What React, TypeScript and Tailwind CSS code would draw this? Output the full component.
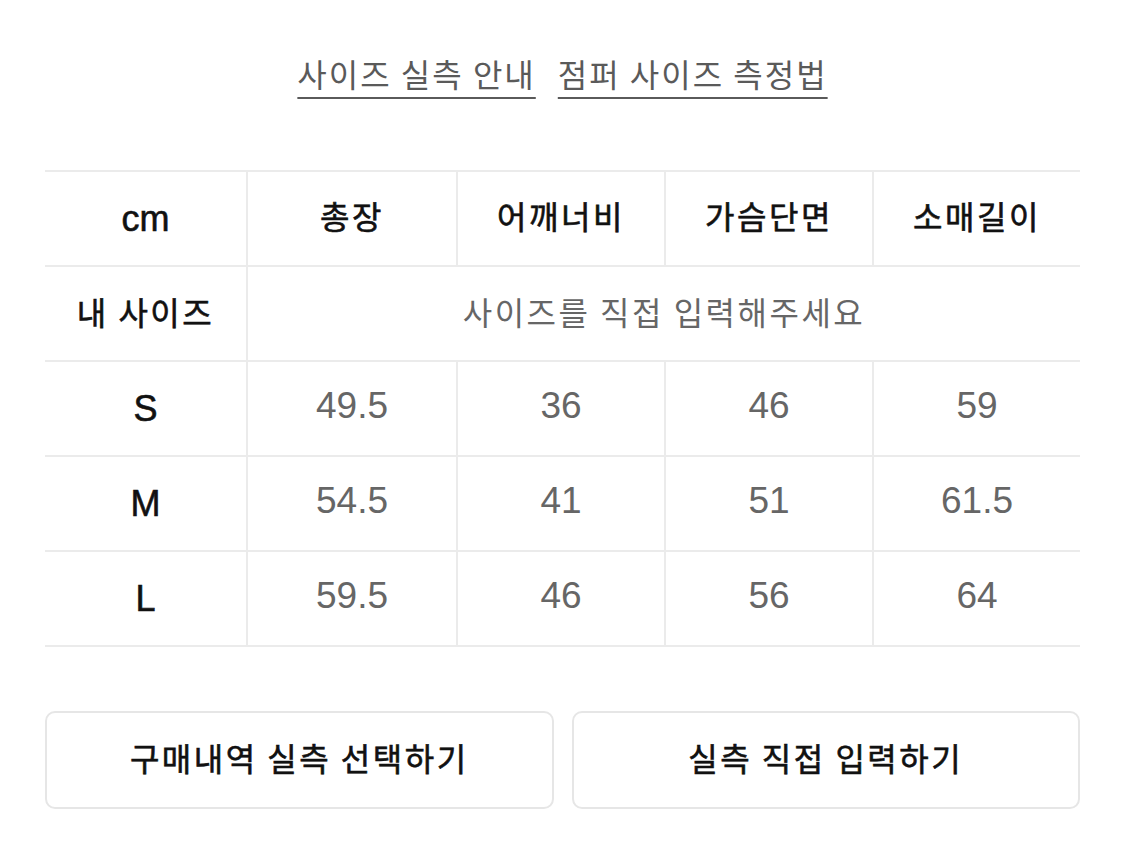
const ko = "font-['Noto_Sans_CJK_KR','Noto_Sans_CJK_SC',sans-serif] tracking-[2.5px]"
const latin = "font-['Liberation_Sans','Noto_Sans_CJK_KR',sans-serif]"
const strong = 'text-[#111] [-webkit-text-stroke:0.6px_#111]'

const columns = ['총장', '어깨너비', '가슴단면', '소매길이']

const sizes = [
  { label: 'S', values: ['49.5', '36', '46', '59'] },
  { label: 'M', values: ['54.5', '41', '51', '61.5'] },
  { label: 'L', values: ['59.5', '46', '56', '64'] },
]

const widths = ['w-[210px]', 'w-[208px]', 'w-[208px]', 'flex-1']

function Cell({ className = '', children, last = false }: { className?: string; children: React.ReactNode; last?: boolean }) {
  return (
    <div className={'flex h-full items-center justify-center ' + (last ? '' : 'border-r-2 border-[#ebebeb] ') + className}>
      {children}
    </div>
  )
}

export default function App() {
  return (
    <div className="min-h-[845px] w-full bg-white px-[45px]">
      <div className={`flex justify-center gap-[22px] pt-[57px] text-[32px] leading-none text-[#5a5a5a] ${ko} tracking-[2px]`}>
        <a className="underline decoration-2 underline-offset-[10px]">사이즈 실측 안내</a>
        <a className="underline decoration-2 underline-offset-[10px]">점퍼 사이즈 측정법</a>
      </div>

      <div className="mt-[81px] border-t-2 border-[#ebebeb]">
        <div className="flex h-[95px] border-b-2 border-[#ebebeb]">
          <Cell className={`w-[203px] text-[36px] ${strong} ${latin}`}>cm</Cell>
          {columns.map((name, i) => (
            <Cell key={name} last={i === columns.length - 1} className={`${widths[i]} pb-[7px] text-[32px] ${strong} ${ko}`}>
              {name}
            </Cell>
          ))}
        </div>

        <div className="flex h-[95px] border-b-2 border-[#ebebeb]">
          <Cell className={`w-[203px] pb-[5px] text-[32px] ${strong} ${ko}`}>내 사이즈</Cell>
          <Cell last className={`flex-1 pb-[5px] text-[32px] text-[#666] ${ko}`}>
            사이즈를 직접 입력해주세요
          </Cell>
        </div>

        {sizes.map((row) => (
          <div key={row.label} className="flex h-[95px] border-b-2 border-[#ebebeb]">
            <Cell className={`w-[203px] text-[36px] ${strong} ${latin}`}>{row.label}</Cell>
            {row.values.map((value, i) => (
              <Cell key={i} last={i === row.values.length - 1} className={`${widths[i]} pb-[5px] text-[37px] text-[#666] ${latin}`}>
                {value}
              </Cell>
            ))}
          </div>
        ))}
      </div>

      <div className={`mt-[64px] flex gap-[18px] ${ko}`}>
        <button className={`flex h-[98px] flex-1 items-center justify-center rounded-[10px] border-2 border-[#e6e6e6] bg-white pb-[7px] text-[32px] ${strong}`}>
          구매내역 실측 선택하기
        </button>
        <button className={`flex h-[98px] flex-1 items-center justify-center rounded-[10px] border-2 border-[#e6e6e6] bg-white pb-[7px] text-[32px] ${strong}`}>
          실측 직접 입력하기
        </button>
      </div>
    </div>
  )
}
